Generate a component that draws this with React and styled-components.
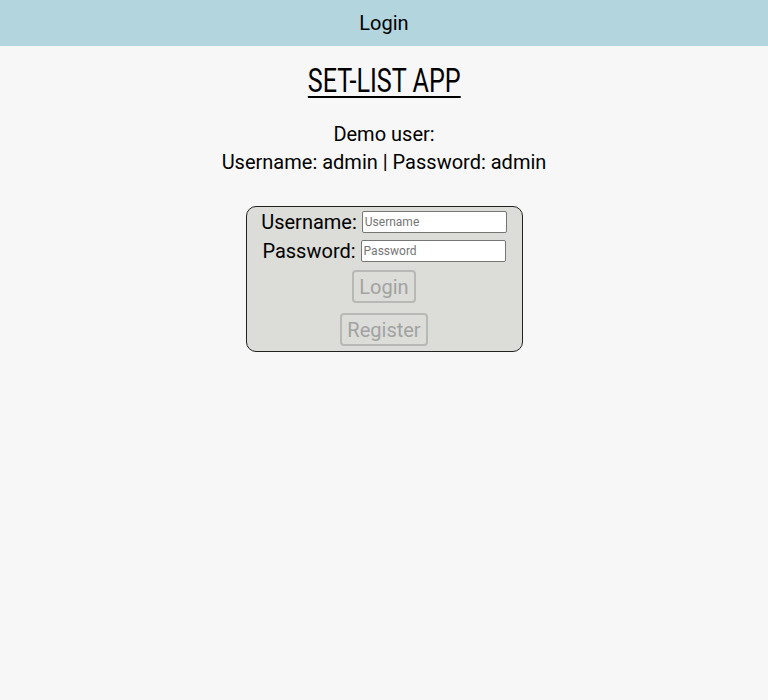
import React from "react";
import styled, { createGlobalStyle } from "styled-components";

const GlobalStyle = createGlobalStyle`
  body {
    margin: 0;
    background-color: #f7f7f7;
    font-family: Roboto, "Noto Sans", sans-serif;
    color: #000;
  }
`;

const Header = styled.header`
  height: 46px;
  background-color: #b2d5de;
  display: flex;
  align-items: center;
  justify-content: center;
  font-size: 20px;
`;

const Main = styled.main`
  display: flex;
  flex-direction: column;
  align-items: center;
`;

const Title = styled.h1`
  margin: 14px 0 0;
  font-size: 34px;
  font-weight: 400;
  line-height: 40px;
  text-decoration: underline;
  text-decoration-thickness: 2px;
  text-underline-offset: 4px;
  display: inline-block;
  transform: scaleX(0.74);
`;

const Demo = styled.div`
  margin-top: 20px;
  font-size: 20px;
  line-height: 28px;
  text-align: center;
`;

const Box = styled.form`
  margin-top: 30px;
  width: 277px;
  box-sizing: border-box;
  padding: 0 0 5px;
  background-color: #dcdcd8;
  border: 1px solid #222;
  border-radius: 10px;
  display: flex;
  flex-direction: column;
  align-items: center;
`;

const Row = styled.label`
  display: flex;
  align-items: center;
  gap: 5px;
  font-size: 20px;
  height: 29px;
`;

const Input = styled.input`
  width: 145px;
  height: 22px;
  box-sizing: border-box;
  border: 1px solid #767676;
  border-radius: 2px;
  padding: 0 2px;
  font-family: Roboto, sans-serif;
  font-size: 12px;
  background: #fff;
  &::placeholder {
    color: #757575;
  }
`;

const Button = styled.button`
  margin-top: ${props => props.first ? "5px" : "10px"};
  height: 33px;
  padding: 0 5px;
  font-family: Roboto, sans-serif;
  font-size: 20px;
  color: #a2a2a2;
  background: transparent;
  border: 2px solid #b8b8b6;
  border-radius: 4px;
`;

export default function App() {
  return (
    <>
      <GlobalStyle />
      <Header>Login</Header>
      <Main>
        <Title>SET-LIST APP</Title>
        <Demo>
          Demo user:
          <br />
          Username: admin | Password: admin
        </Demo>
        <Box onSubmit={e => e.preventDefault()}>
          <Row>
            Username:
            <Input placeholder="Username" />
          </Row>
          <Row>
            Password:
            <Input type="password" placeholder="Password" />
          </Row>
          <Button first disabled>Login</Button>
          <Button disabled>Register</Button>
        </Box>
      </Main>
    </>
  );
}
